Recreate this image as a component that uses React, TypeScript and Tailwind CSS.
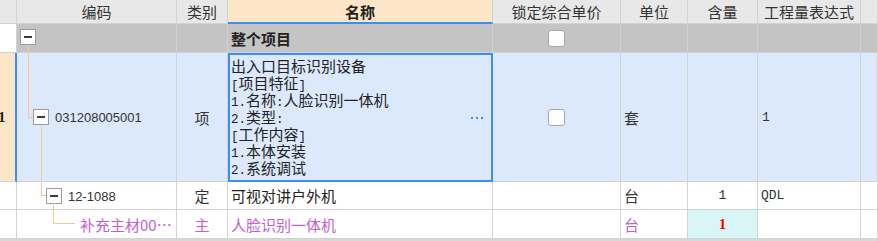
import React from "react";

const cell = "relative border-r border-b border-[#d2d2d2] overflow-hidden";

function MinusBox({ pos }: { pos: string }) {
  return (
    <div className={`absolute w-4 h-4 bg-white border border-[#9c9c9c] flex items-center justify-center ${pos}`}>
      <div className="w-[8px] h-[2px] bg-[#3a3a3a]" />
    </div>
  );
}

function CheckBox() {
  return <div className="w-[17px] h-[17px] bg-white border border-[#a8a8a8] rounded-[3px]" />;
}

function A({ children }: { children: React.ReactNode }) {
  return <span className="font-['Liberation_Mono',monospace] text-[12.5px] leading-none">{children}</span>;
}

function Line({ children }: { children: React.ReactNode }) {
  return <div className="flex items-baseline h-[17px] leading-[17px]">{children}</div>;
}

export default function App() {
  return (
    <div className="w-[878px] h-[241px] bg-[#d8d8d8] overflow-hidden font-['Noto_Sans_CJK_SC','Liberation_Sans',sans-serif] text-[15px] text-[#333]">
      <div className="grid grid-cols-[17px_160px_51px_265px_128px_67px_70px_103px_1fr] grid-rows-[24px_29px_129px_28px_29px] bg-white">
        {/* header */}
        <div className={`${cell} bg-[#e8e8e8]`} />
        <div className={`${cell} bg-[#e8e8e8] flex items-center justify-center leading-none`}>编码</div>
        <div className={`${cell} bg-[#e8e8e8] flex items-center justify-center leading-none`}>类别</div>
        <div className="relative border-r border-b-2 border-r-[#d2d2d2] border-b-[#3c8ef0] bg-[#fde5c7] flex items-center justify-center leading-none font-bold text-[#222]">名称</div>
        <div className={`${cell} bg-[#e8e8e8] flex items-center justify-center leading-none`}>锁定综合单价</div>
        <div className={`${cell} bg-[#e8e8e8] flex items-center justify-center leading-none`}>单位</div>
        <div className={`${cell} bg-[#e8e8e8] flex items-center justify-center leading-none`}>含量</div>
        <div className={`${cell} bg-[#e8e8e8] flex items-center justify-center leading-none`}>工程量表达式</div>
        <div className={`${cell} bg-[#e8e8e8]`} />

        {/* row 1 */}
        <div className={`${cell} bg-white`} />
        <div className={`${cell} bg-[#c4c4c4]`}>
          <MinusBox pos="left-[3px] top-[5px]" />
          <div className="absolute left-[11px] top-[21px] -bottom-px w-px bg-[#f9c88c]" />
        </div>
        <div className={`${cell} bg-[#c4c4c4]`} />
        <div className={`${cell} bg-[#c4c4c4] flex items-center pl-[3px] font-bold text-[#222] leading-none`}>整个项目</div>
        <div className={`${cell} bg-[#c4c4c4] flex items-center justify-center`}>
          <CheckBox />
        </div>
        <div className={`${cell} bg-[#c4c4c4]`} />
        <div className={`${cell} bg-[#c4c4c4]`} />
        <div className={`${cell} bg-[#c4c4c4]`} />
        <div className={`${cell} bg-[#c4c4c4]`} />

        {/* row 2 */}
        <div className="relative border-r-2 border-b border-r-[#3c8ef0] border-b-[#d2d2d2] bg-[#fde5c7] flex items-center">
          <span className="-ml-[2px] font-['Liberation_Serif',serif] font-bold text-[15px] text-[#222] leading-none">1</span>
        </div>
        <div className={`${cell} bg-[#dce9fc]`}>
          <div className="absolute left-[11px] top-0 h-[65px] w-px bg-[#f9c88c]" />
          <div className="absolute left-[11px] top-[64px] w-[5px] h-px bg-[#f9c88c]" />
          <MinusBox pos="left-[16px] top-[56px]" />
          <div className="absolute left-[24px] top-[72px] -bottom-px w-px bg-[#f9c88c]" />
          <div className="absolute left-[38px] top-[56px] h-4 flex items-center font-['Liberation_Sans',sans-serif] text-[13px] text-[#333] leading-none">031208005001</div>
        </div>
        <div className={`${cell} bg-[#dce9fc] flex items-center justify-center leading-none`}>项</div>
        <div className="relative border-2 border-[#3c8ef0] bg-[#dce9fc] pl-[1px] pt-[2px] text-[15px] text-[#222] whitespace-nowrap">
          <Line>出入口目标识别设备</Line>
          <Line><A>[</A>项目特征<A>]</A></Line>
          <Line><A>1.</A>名称<A>:</A>人脸识别一体机</Line>
          <Line><A>2.</A>类型<A>:</A></Line>
          <Line><A>[</A>工作内容<A>]</A></Line>
          <Line><A>1.</A>本体安装</Line>
          <Line><A>2.</A>系统调试</Line>
          <div className="absolute right-[8px] top-[62px] flex gap-[3px]">
            <div className="w-[2px] h-[2px] bg-[#3c8ef0]" />
            <div className="w-[2px] h-[2px] bg-[#3c8ef0]" />
            <div className="w-[2px] h-[2px] bg-[#3c8ef0]" />
          </div>
        </div>
        <div className={`${cell} bg-[#dce9fc] flex items-center justify-center`}>
          <CheckBox />
        </div>
        <div className={`${cell} bg-[#dce9fc] flex items-center pl-[3px] leading-none`}>套</div>
        <div className={`${cell} bg-[#dce9fc]`} />
        <div className={`${cell} bg-[#dce9fc] flex items-center pl-[4px] font-['Liberation_Mono',monospace] text-[13px] leading-none`}>1</div>
        <div className={`${cell} bg-[#dce9fc]`} />

        {/* row 3 */}
        <div className={`${cell} bg-white`} />
        <div className={`${cell} bg-white`}>
          <div className="absolute left-[24px] top-0 h-[14px] w-px bg-[#f9c88c]" />
          <div className="absolute left-[24px] top-[13px] w-[5px] h-px bg-[#f9c88c]" />
          <MinusBox pos="left-[29px] top-[6px]" />
          <div className="absolute left-[36px] top-[21px] -bottom-px w-px bg-[#f9c88c]" />
          <div className="absolute left-[51px] top-[6px] h-4 flex items-center font-['Liberation_Sans',sans-serif] text-[13px] text-[#333] leading-none">12-1088</div>
        </div>
        <div className={`${cell} bg-white flex items-center justify-center leading-none`}>定</div>
        <div className={`${cell} bg-white flex items-center pl-[3px] leading-none text-[#222]`}>可视对讲户外机</div>
        <div className={`${cell} bg-white`} />
        <div className={`${cell} bg-white flex items-center pl-[3px] leading-none`}>台</div>
        <div className={`${cell} bg-white flex items-center justify-center font-['Liberation_Mono',monospace] text-[13px] leading-none`}>1</div>
        <div className={`${cell} bg-white flex items-center pl-[3px] font-['Liberation_Mono',monospace] text-[13px] leading-none`}>QDL</div>
        <div className={`${cell} bg-white`} />

        {/* row 4 */}
        <div className={`${cell} bg-white`} />
        <div className={`${cell} bg-white`}>
          <div className="absolute left-[36px] top-0 h-[14px] w-px bg-[#f9c88c]" />
          <div className="absolute left-[36px] top-[13px] w-[22px] h-px bg-[#f9c88c]" />
          <div className="absolute left-[63px] top-0 bottom-0 flex items-center text-[15px] text-[#c25fd0] leading-none whitespace-nowrap">补充主材00…</div>
        </div>
        <div className={`${cell} bg-white flex items-center justify-center leading-none text-[#c25fd0]`}>主</div>
        <div className={`${cell} bg-white flex items-center pl-[3px] leading-none text-[#c25fd0]`}>人脸识别一体机</div>
        <div className={`${cell} bg-white`} />
        <div className={`${cell} bg-white flex items-center pl-[3px] leading-none text-[#c25fd0]`}>台</div>
        <div className={`${cell} bg-[#d9f6f7] flex items-center justify-center font-['Liberation_Serif',serif] font-bold text-[15px] text-[#ff0000] leading-none`}>1</div>
        <div className={`${cell} bg-white`} />
        <div className={`${cell} bg-white`} />
      </div>
    </div>
  );
}
